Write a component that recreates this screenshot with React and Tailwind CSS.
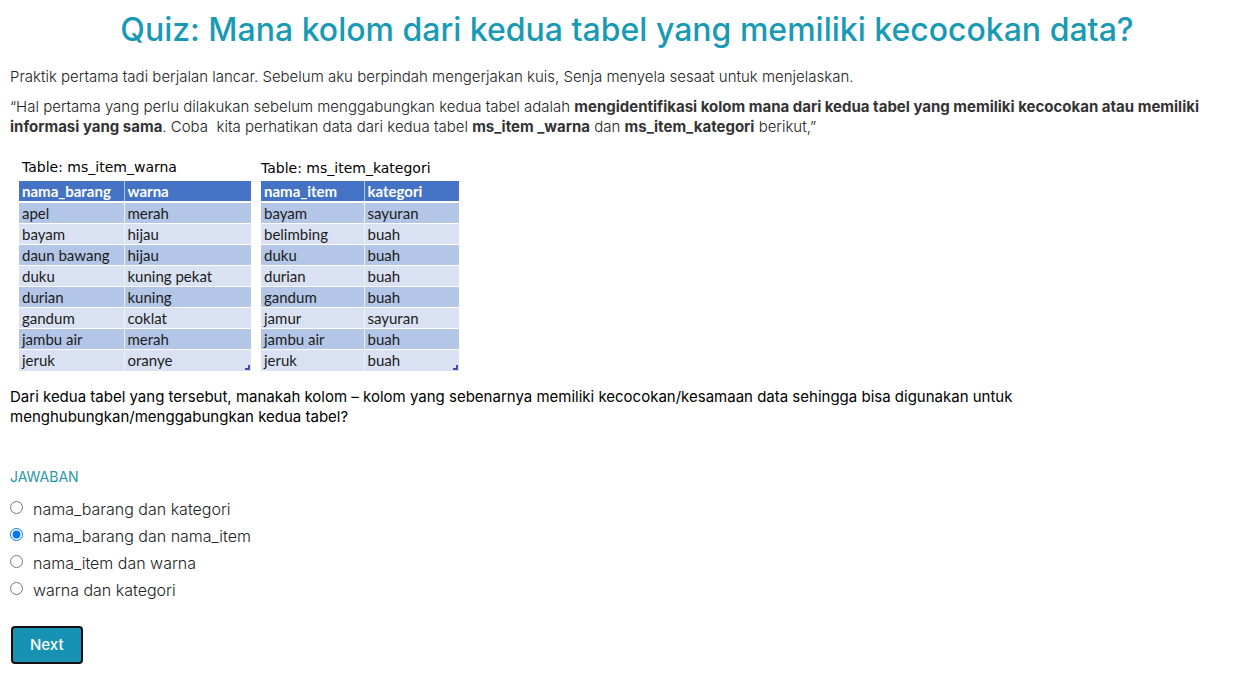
import { useState } from "react";

const tables = [
  {
    caption: "Table: ms_item_warna",
    captionClass: "pl-[3px] pt-[2px] pb-[2px]",
    widthClass: "w-[232px]",
    firstClass: "w-[105px]",
    head: ["nama_barang", "warna"],
    rows: [
      ["apel", "merah"],
      ["bayam", "hijau"],
      ["daun bawang", "hijau"],
      ["duku", "kuning pekat"],
      ["durian", "kuning"],
      ["gandum", "coklat"],
      ["jambu air", "merah"],
      ["jeruk", "oranye"],
    ],
  },
  {
    caption: "Table: ms_item_kategori",
    captionClass: "pt-[3px] pb-px",
    widthClass: "w-[198px]",
    firstClass: "w-[103px]",
    head: ["nama_item", "kategori"],
    rows: [
      ["bayam", "sayuran"],
      ["belimbing", "buah"],
      ["duku", "buah"],
      ["durian", "buah"],
      ["gandum", "buah"],
      ["jamur", "sayuran"],
      ["jambu air", "buah"],
      ["jeruk", "buah"],
    ],
  },
];

const answers = [
  "nama_barang dan kategori",
  "nama_barang dan nama_item",
  "nama_item dan warna",
  "warna dan kategori",
];

function DataTable({ table }) {
  return (
    <div className="relative">
      <table
        className={`${table.widthClass} table-fixed border-collapse text-left font-['Lato','Liberation_Sans',sans-serif] text-[15px] leading-5 text-[#1c1c1c]`}
      >
        <caption
          className={`${table.captionClass} whitespace-nowrap text-left font-['DejaVu_Sans',sans-serif] text-sm leading-6 text-black`}
        >
          {table.caption}
        </caption>
        <thead>
          <tr className="h-[21px] border-b-2 border-white bg-[#4472c4] text-white">
            {table.head.map((name, i) => (
              <th
                key={name}
                className={`${i === 0 ? table.firstClass : ""} ${i === 0 ? "border-r border-[#b4c6e7]" : ""} px-[3px] py-0 font-bold`}
              >
                {name}
              </th>
            ))}
          </tr>
        </thead>
        <tbody>
          {table.rows.map((row) => (
            <tr key={row[0]} className="h-[21px] border-b border-white odd:bg-[#b4c6e7] even:bg-[#d9e1f2] last:border-b-0">
              <td className="border-r border-[#edf1fa] px-[3px] py-0">{row[0]}</td>
              <td className="px-[3px] py-0">{row[1]}</td>
            </tr>
          ))}
        </tbody>
      </table>
      <svg className="absolute right-px bottom-px size-[5px]" viewBox="0 0 5 5" aria-hidden="true">
        <path d="M3 0h2v5H0V3h3z" fill="#3f51a8" />
      </svg>
    </div>
  );
}

export default function App() {
  const [answer, setAnswer] = useState(answers[1]);

  return (
    <main className="bg-white px-[10px] pt-3 pb-4 font-['Inter','Liberation_Sans',sans-serif] text-[15px] leading-5 text-[#222]">
      <h1 className="text-center text-[32px] leading-9 font-medium text-[#189ab4]">
        Quiz: Mana kolom dari kedua tabel yang memiliki kecocokan data?
      </h1>
      <p className="mt-[19px] font-light">
        Praktik pertama tadi berjalan lancar. Sebelum aku berpindah mengerjakan kuis, Senja menyela sesaat untuk
        menjelaskan.
      </p>
      <p className="mt-[10px] font-light">
        “Hal pertama yang perlu dilakukan sebelum menggabungkan kedua tabel adalah{" "}
        <strong className="font-bold text-[#333]">
          mengidentifikasi kolom mana dari kedua tabel yang memiliki kecocokan atau memiliki informasi yang sama
        </strong>
        . Coba&nbsp; kita perhatikan data dari kedua tabel{" "}
        <strong className="font-bold text-[#333]">ms_item _warna</strong> dan{" "}
        <strong className="font-bold text-[#333]">ms_item_kategori</strong> berikut,”
      </p>
      <div className="mt-4 ml-[9px] flex items-end gap-[10px]">
        {tables.map((table) => (
          <DataTable key={table.caption} table={table} />
        ))}
      </div>
      <p className="mt-4 text-black">
        Dari kedua tabel yang tersebut, manakah kolom – kolom yang sebenarnya memiliki kecocokan/kesamaan data sehingga
        bisa digunakan untuk menghubungkan/menggabungkan kedua tabel?
      </p>
      <form onSubmit={(event) => event.preventDefault()}>
        <fieldset className="mt-10">
          <legend className="mb-3 text-sm text-[#2795a8]">JAWABAN</legend>
          <div className="flex flex-col items-start gap-[7px]">
            {answers.map((text) => (
              <label key={text} className="flex items-start gap-[10px] text-base leading-5 font-light">
                <input
                  type="radio"
                  name="jawaban"
                  value={text}
                  checked={answer === text}
                  onChange={() => setAnswer(text)}
                  className="mt-[2px] size-[13px]"
                />
                {text}
              </label>
            ))}
          </div>
        </fieldset>
        <button
          type="submit"
          className="mt-[26px] ml-px rounded-[4px] border-2 border-[#101010] bg-[#1792b3] px-[17px] py-[7px] text-[15px] leading-5 font-medium text-white"
        >
          Next
        </button>
      </form>
    </main>
  );
}
